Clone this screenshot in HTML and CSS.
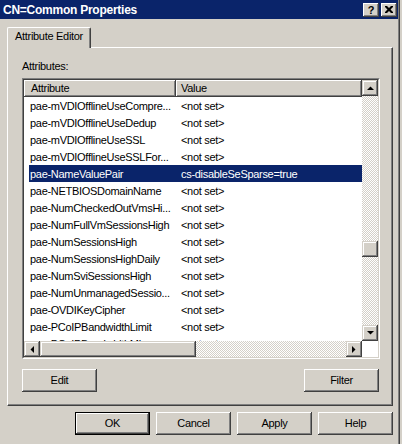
FILE: index.html
```html
<!DOCTYPE html>
<html>
<head>
<meta charset="utf-8">
<link rel="stylesheet" href="styles.css">
</head>
<body>
<div class="window">
  <div class="titlebar">
    <span class="title">CN=Common Properties</span>
    <div class="tbtns">
      <span class="tbtn">?</span>
      <span class="tbtn"><svg width="8" height="7" viewBox="0 0 8 7"><path d="M0 0h2l2 2 2-2h2v1l-2.5 2.5L8 6v1H6L4 5 2 7H0V6l2.5-2.5L0 1z" fill="#000"/></svg></span>
    </div>
  </div>
  <div class="content">
    <div class="tabs"><div class="tab">Attribute Editor</div></div>
    <div class="panel">
      <div class="label">Attributes:</div>
      <div class="listbox">
        <div class="lb-inner">
          <div class="lb-main">
            <div class="header"><div class="hcell h1">Attribute</div><div class="hcell h2">Value</div></div>
            <div class="rows">
              <div class="row"><div class="c1">pae-mVDIOfflineUseCompre...</div><div class="c2">&lt;not set&gt;</div></div>
              <div class="row"><div class="c1">pae-mVDIOfflineUseDedup</div><div class="c2">&lt;not set&gt;</div></div>
              <div class="row"><div class="c1">pae-mVDIOfflineUseSSL</div><div class="c2">&lt;not set&gt;</div></div>
              <div class="row"><div class="c1">pae-mVDIOfflineUseSSLFor...</div><div class="c2">&lt;not set&gt;</div></div>
              <div class="row sel"><div class="c1">pae-NameValuePair</div><div class="c2">cs-disableSeSparse=true</div></div>
              <div class="row"><div class="c1">pae-NETBIOSDomainName</div><div class="c2">&lt;not set&gt;</div></div>
              <div class="row"><div class="c1">pae-NumCheckedOutVmsHi...</div><div class="c2">&lt;not set&gt;</div></div>
              <div class="row"><div class="c1">pae-NumFullVmSessionsHigh</div><div class="c2">&lt;not set&gt;</div></div>
              <div class="row"><div class="c1">pae-NumSessionsHigh</div><div class="c2">&lt;not set&gt;</div></div>
              <div class="row"><div class="c1">pae-NumSessionsHighDaily</div><div class="c2">&lt;not set&gt;</div></div>
              <div class="row"><div class="c1">pae-NumSviSessionsHigh</div><div class="c2">&lt;not set&gt;</div></div>
              <div class="row"><div class="c1">pae-NumUnmanagedSessio...</div><div class="c2">&lt;not set&gt;</div></div>
              <div class="row"><div class="c1">pae-OVDIKeyCipher</div><div class="c2">&lt;not set&gt;</div></div>
              <div class="row"><div class="c1">pae-PCoIPBandwidthLimit</div><div class="c2">&lt;not set&gt;</div></div>
              <div class="row"><div class="c1">pae-PCoIPBandwidthMin</div><div class="c2">&lt;not set&gt;</div></div>
            </div>
            <div class="hscroll">
              <div class="sbtn"><svg width="4" height="7" viewBox="0 0 4 7"><polygon points="4,0 4,7 0.5,3.5" fill="#000"/></svg></div>
              <div class="htrack"><div class="thumb hthumb"></div></div>
              <div class="sbtn"><svg width="4" height="7" viewBox="0 0 4 7"><polygon points="0,0 0,7 3.5,3.5" fill="#000"/></svg></div>
            </div>
          </div>
          <div class="vscroll">
            <div class="sbtn"><svg width="7" height="4" viewBox="0 0 7 4"><polygon points="0,4 7,4 3.5,0.5" fill="#000"/></svg></div>
            <div class="vtrack"><div class="thumb vthumb"></div></div>
            <div class="sbtn"><svg width="7" height="4" viewBox="0 0 7 4"><polygon points="0,0 7,0 3.5,3.5" fill="#000"/></svg></div>
            <div class="corner"></div>
          </div>
        </div>
      </div>
      <div class="btnrow">
        <button class="btn">Edit</button>
        <button class="btn">Filter</button>
      </div>
    </div>
    <div class="dlgbtns">
      <button class="btn default">OK</button>
      <button class="btn">Cancel</button>
      <button class="btn">Apply</button>
      <button class="btn">Help</button>
    </div>
  </div>
</div>
</body>
</html>
```
FILE: styles.css
```css
html, body {
  margin: 0;
  padding: 0;
}
body {
  width: 402px;
  height: 444px;
  overflow: hidden;
  background: #d4d0c8;
  font-family: "Liberation Sans", Arial, sans-serif;
  font-size: 11px;
  letter-spacing: -0.3px;
  color: #000;
}
.window {
  width: 400px;
  height: 444px;
  box-shadow: inset -1px 0 #404040, inset -2px 0 #808080;
}
.titlebar {
  width: 398px;
  height: 19px;
  box-sizing: border-box;
  padding: 0 1px 0 3px;
  background: #0a246a;
  color: #fff;
  display: flex;
  align-items: center;
}
.title {
  font-weight: bold;
  font-size: 12px;
  letter-spacing: -0.25px;
}
.tbtns {
  margin-left: auto;
  display: flex;
  gap: 2px;
}
.tbtn {
  width: 16px;
  height: 14px;
  background: #d4d0c8;
  box-shadow: inset -1px -1px #404040, inset 1px 1px #fff, inset -2px -2px #808080;
  display: flex;
  align-items: center;
  justify-content: center;
  color: #000;
  font-weight: bold;
  font-size: 11px;
  letter-spacing: 0;
  line-height: 14px;
}
.content {
  width: 386px;
  padding: 8px 0 0 7px;
}
.tabs {
  height: 20px;
  display: flex;
}
.tab {
  width: 84px;
  height: 21px;
  box-sizing: border-box;
  margin-bottom: -1px;
  background: #d4d0c8;
  border-top: 1px solid #fff;
  border-left: 1px solid #fff;
  border-right: 1px solid #404040;
  border-radius: 2px 2px 0 0;
  box-shadow: inset -1px 0 #808080;
  padding: 2px 0 0 7px;
  line-height: 13px;
  position: relative;
  z-index: 1;
}
.panel {
  width: 386px;
  height: 359px;
  box-sizing: border-box;
  border: 1px solid;
  border-color: #fff #404040 #404040 #fff;
  box-shadow: inset -1px -1px #808080;
  padding: 12px 0 0 14px;
}
.label {
  line-height: 13px;
  margin-bottom: 5px;
}
.listbox {
  width: 358px;
  height: 281px;
  box-sizing: border-box;
  border: 1px solid;
  border-color: #808080 #fff #fff #808080;
}
.lb-inner {
  height: 100%;
  box-sizing: border-box;
  border: 1px solid;
  border-color: #404040 #d4d0c8 #d4d0c8 #404040;
  background: #fff;
  display: flex;
}
.lb-main {
  width: 338px;
  display: flex;
  flex-direction: column;
}
.header {
  display: flex;
  height: 17px;
}
.hcell {
  height: 17px;
  box-sizing: border-box;
  background: #d4d0c8;
  box-shadow: inset -1px -1px #404040, inset 1px 1px #fff, inset -2px -2px #808080;
  line-height: 17px;
  white-space: nowrap;
}
.h1 {
  width: 152px;
  padding-left: 7px;
}
.h2 {
  width: 186px;
  padding-left: 5px;
}
.rows {
  height: 244px;
  overflow: hidden;
}
.row {
  display: flex;
  height: 17px;
  line-height: 18px;
  margin-left: 5px;
  width: 333px;
  white-space: nowrap;
  overflow: hidden;
}
.row.sel {
  background: #0a246a;
  color: #fff;
}
.c1 {
  width: 147px;
  flex: none;
  box-sizing: border-box;
  padding-left: 1px;
  overflow: hidden;
}
.c2 {
  padding-left: 5px;
}
.hscroll {
  height: 16px;
  display: flex;
}
.sbtn, .thumb {
  width: 16px;
  height: 16px;
  flex: none;
  box-sizing: border-box;
  background: #d4d0c8;
  box-shadow: inset -1px -1px #404040, inset 1px 1px #d4d0c8, inset -2px -2px #808080, inset 2px 2px #fff;
  display: flex;
  align-items: center;
  justify-content: center;
}
.htrack, .vtrack {
  flex: 1;
  display: flex;
  background-color: #fff;
  background-image: repeating-conic-gradient(#d4d0c8 0 25%, #fff 0 50%);
  background-size: 2px 2px;
}
.hthumb {
  width: 156px;
}
.vscroll {
  width: 16px;
  display: flex;
  flex-direction: column;
}
.vtrack {
  flex-direction: column;
  padding-top: 145px;
}
.corner {
  width: 16px;
  height: 16px;
  background: #fff;
}
.btn {
  width: 75px;
  height: 23px;
  padding: 0;
  margin: 0;
  border: 0;
  background: #d4d0c8;
  box-shadow: inset -1px -1px #404040, inset 1px 1px #fff, inset -2px -2px #808080, inset 2px 2px #d4d0c8;
  font-family: "Liberation Sans", Arial, sans-serif;
  font-size: 11px;
  letter-spacing: -0.3px;
  line-height: 23px;
  color: #000;
  text-align: center;
}
.btn.default {
  box-shadow: inset 0 0 0 1px #000, inset -2px -2px #404040, inset 2px 2px #fff, inset -3px -3px #808080;
}
.btnrow {
  width: 357px;
  display: flex;
  justify-content: space-between;
  margin-top: 10px;
}
.dlgbtns {
  display: flex;
  justify-content: flex-end;
  gap: 6px;
  margin-top: 6px;
}
```
